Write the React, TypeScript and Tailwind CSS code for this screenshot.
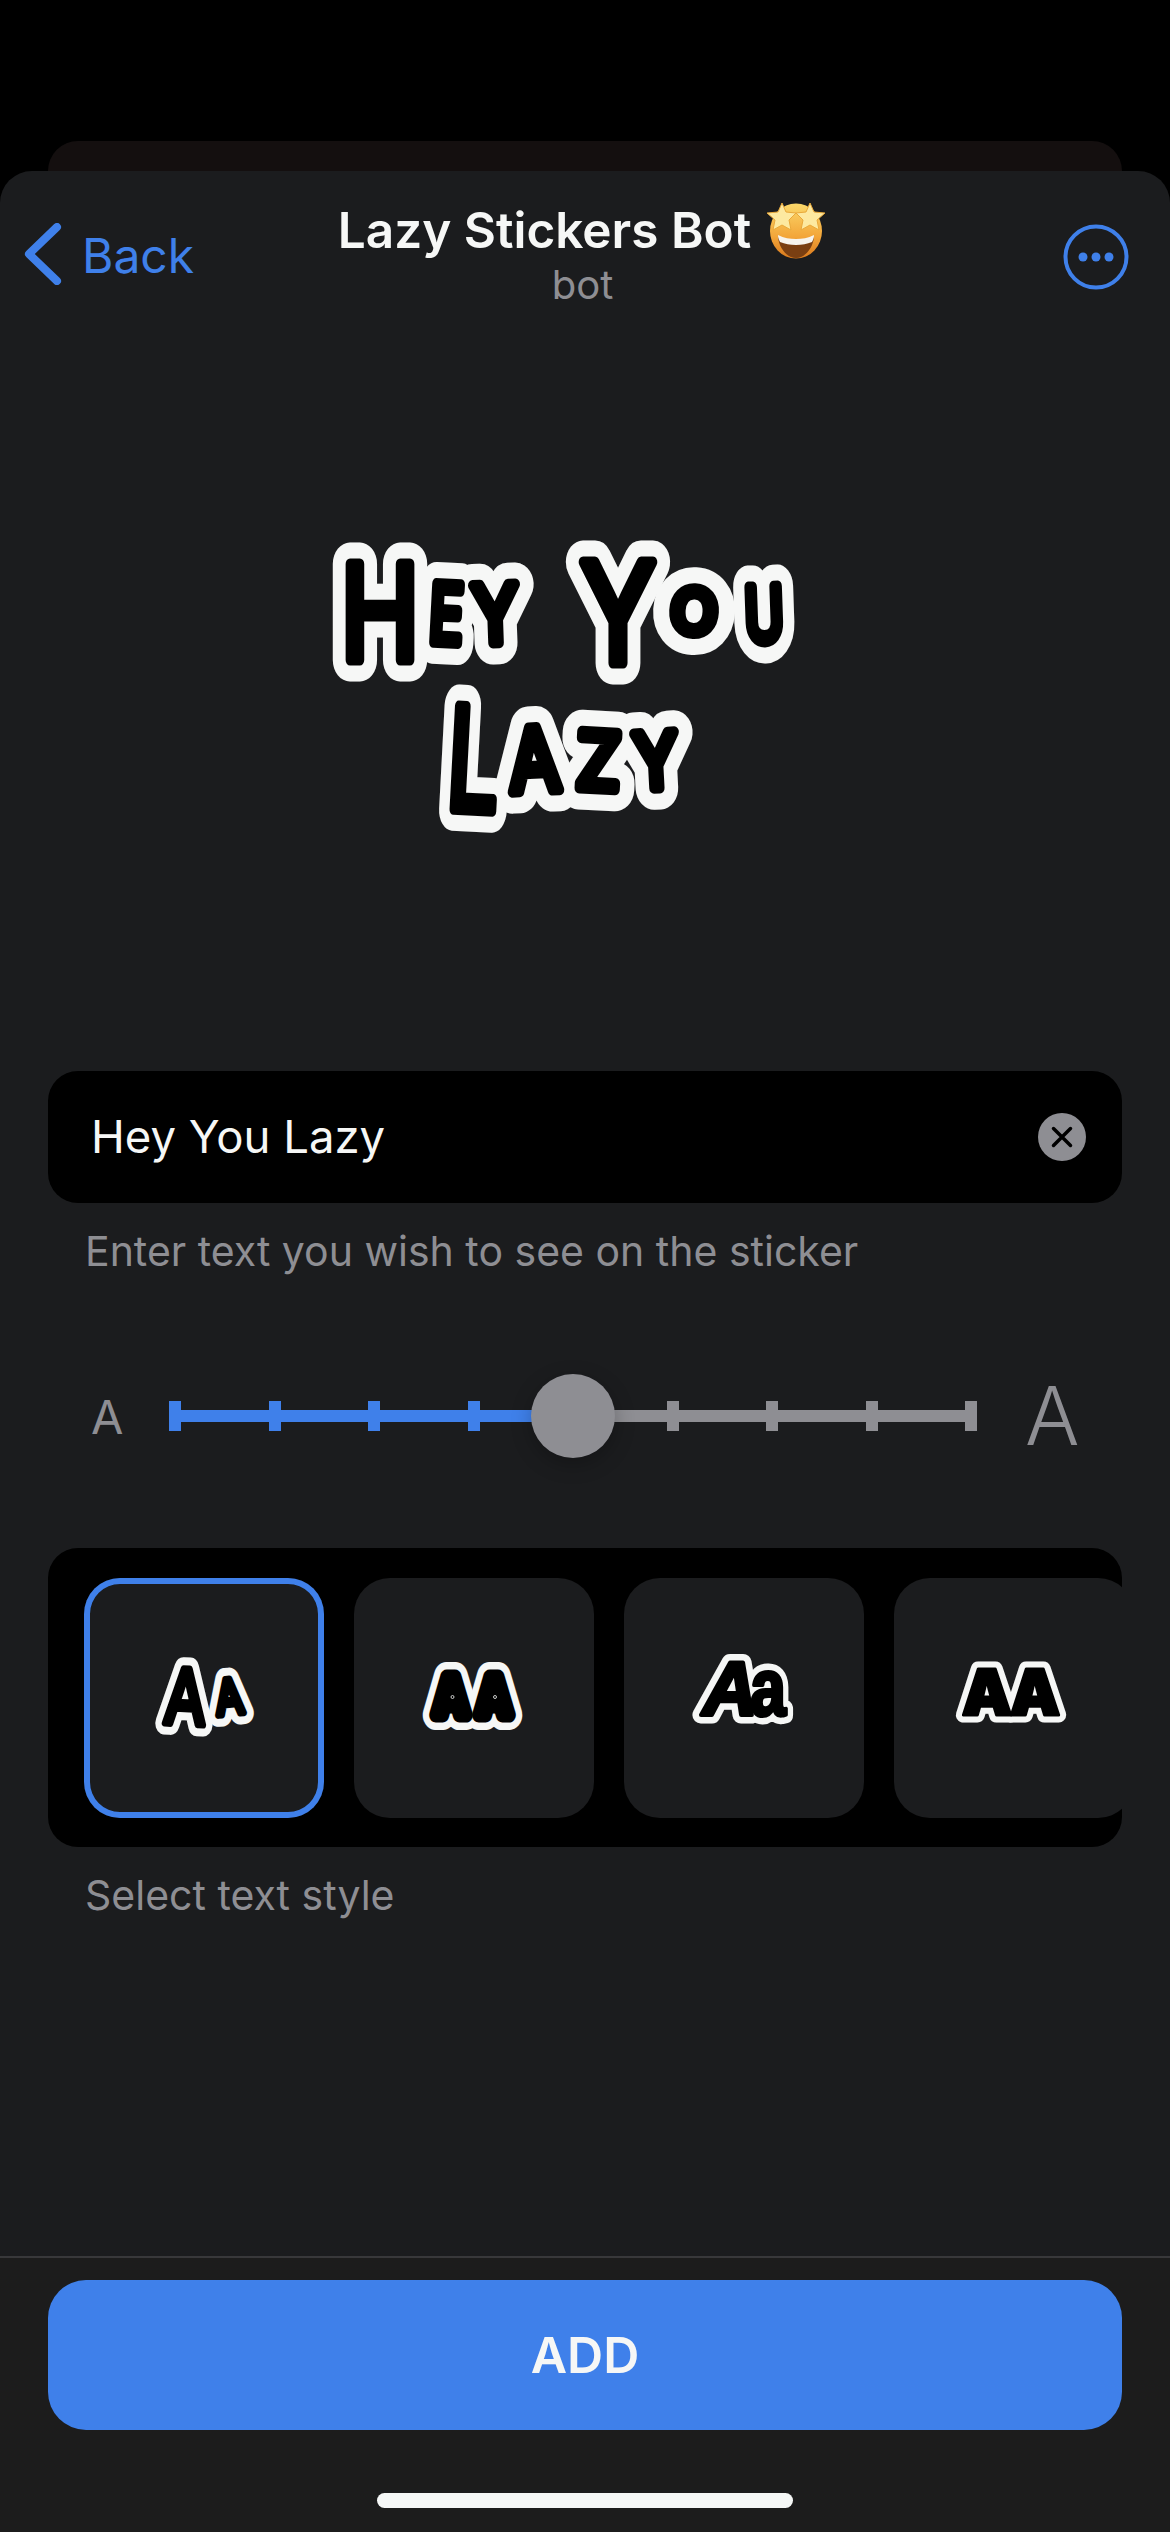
import React from 'react';

// cx = glyph centre, y = baseline, sx = horizontal squeeze
type Glyph = { ch: string; cx: number; y: number; size: number; rot?: number; sx?: number; italic?: boolean };

const heyYouLazy: Glyph[] = [
  { ch: 'H', cx: 80, y: 150, size: 132, sx: 0.8 },
  { ch: 'E', cx: 145, y: 133, size: 81, sx: 0.7, rot: 3 },
  { ch: 'Y', cx: 196, y: 133, size: 80, sx: 0.85, rot: -2 },
  { ch: 'Y', cx: 318, y: 153, size: 139, sx: 0.8 },
  { ch: 'O', cx: 393, y: 123, size: 60, rot: 3 },
  { ch: 'U', cx: 465, y: 131, size: 75, sx: 0.7, rot: -2 },
  { ch: 'L', cx: 171, y: 300, size: 142, sx: 0.65, rot: 3 },
  { ch: 'A', cx: 236, y: 281, size: 87, sx: 0.85, rot: -3 },
  { ch: 'Z', cx: 297, y: 279, size: 78, sx: 0.9, rot: 3 },
  { ch: 'Y', cx: 357, y: 278, size: 76, sx: 0.85, rot: -3 },
];

const StickerText: React.FC<{
  glyphs: Glyph[];
  family: string;
  weight: number;
  inner: number;
  outer: number;
}> = ({ glyphs, family, weight, inner, outer }) => {
  const pass = (color: string, width: number) =>
    glyphs.map((g, i) => (
      <text
        key={`${color}-${i}`}
        textAnchor="middle"
        fontSize={g.size}
        fontFamily={family}
        fontWeight={weight}
        fontStyle={g.italic ? 'italic' : 'normal'}
        fill={color}
        stroke={color}
        strokeWidth={width}
        strokeLinejoin="round"
        strokeLinecap="round"
        transform={`translate(${g.cx} ${g.y}) rotate(${g.rot ?? 0}) scale(${g.sx ?? 1} 1)`}
      >
        {g.ch}
      </text>
    ));
  return (
    <>
      {pass('#f6f7f6', outer)}
      {pass('#000000', inner)}
    </>
  );
};

const StyleTile: React.FC<{ selected?: boolean; children: React.ReactNode }> = ({ selected, children }) => (
  <div
    className={`w-[240px] h-[240px] shrink-0 rounded-[36px] bg-[#1b1c1e] ${selected ? 'shadow-[inset_0_0_0_6px_#3f80ea]' : ''}`}
  >
    <svg viewBox="0 0 240 240" className="block w-[240px] h-[240px]">
      {children}
    </svg>
  </div>
);

const StarStruck = () => (
  <svg width="62" height="58" viewBox="0 0 62 58" className="shrink-0">
    <defs>
      <linearGradient id="face" x1="0" y1="0" x2="0" y2="1">
        <stop offset="0" stopColor="#fbd86a" />
        <stop offset="0.6" stopColor="#f3a63a" />
        <stop offset="1" stopColor="#d9791d" />
      </linearGradient>
    </defs>
    <ellipse cx="31" cy="30" rx="26" ry="27.5" fill="url(#face)" />
    <path d="M31 42c-9 0-15-3-18-6 1 11 9 21 18 21s17-10 18-21c-3 3-9 6-18 6z" fill="#7a3f12" />
    <path d="M13 34c6 3 12 4 18 4s12-1 18-4c0 3-1 5-2 7-5 2-10 3-16 3s-11-1-16-3c-1-2-2-4-2-7z" fill="#f7f4ee" />
    <path d="M17 2l4 9 10 1-7 7 2 10-9-5-9 5 2-10-8-7 11-1z" fill="#fde9a0" stroke="#e9a93a" strokeWidth="1" />
    <path d="M45 2l4 9 11 1-8 7 2 10-9-5-9 5 2-10-7-7 10-1z" fill="#fde9a0" stroke="#e9a93a" strokeWidth="1" />
  </svg>
);

const ticks = [0, 1, 2, 3, 4, 5, 6, 7, 8];

const SizeSlider = () => (
  <div className="mt-[99px] h-[84px] flex items-center">
    <span className="ml-[91px] w-[78px] text-[47px] leading-none text-[#8e8e93]">A</span>
    <div className="relative w-[808px] h-[84px] flex items-center">
      <div className="w-[404px] h-[12px] bg-[#3f80ea]" />
      <div className="w-[404px] h-[12px] bg-[#8e8e93]" />
      {ticks.map((t) =>
        t === 4 ? null : (
          <div
            key={t}
            className={`absolute top-[27px] w-[12px] h-[30px] ${t < 4 ? 'bg-[#3f80ea]' : 'bg-[#8e8e93]'}`}
            style={{ left: t * 99.5 }}
          />
        ),
      )}
      <div className="absolute left-[362px] top-0 w-[84px] h-[84px] rounded-full bg-[#8e8e93] shadow-[0_6px_20px_rgba(0,0,0,0.25)]" />
    </div>
    <span className="ml-[48px] text-[81px] leading-none font-light text-[#8e8e93]">A</span>
  </div>
);

export default function App() {
  return (
    <div className="w-[1170px] h-[2532px] bg-black flex flex-col pt-[141px] overflow-hidden font-[Inter,'Noto_Sans',sans-serif]">
      <div className="mx-[48px] h-[30px] shrink-0 rounded-t-[30px] bg-[#140f0f]" />
      <div className="flex-1 flex flex-col rounded-t-[32px] bg-[#1b1c1e]">
        <header className="h-[130px] shrink-0 grid grid-cols-[1fr_auto_1fr]">
          <div className="flex items-start pt-[52px] pl-[24px]">
            <svg width="38" height="62" viewBox="0 0 38 62" fill="none">
              <path d="M33 4L5 31l28 27" stroke="#3f80ea" strokeWidth="8" strokeLinecap="round" strokeLinejoin="round" />
            </svg>
            <span className="ml-[20px] mt-[3px] text-[48px] leading-[60px] text-[#3f80ea]">Back</span>
          </div>
          <div className="flex flex-col items-center pt-[29px] mr-[5px]">
            <div className="flex items-center gap-[14px] h-[60px]">
              <span className="text-[49.5px] leading-[60px] font-semibold text-[#f6f7f6]">Lazy Stickers Bot</span>
              <StarStruck />
            </div>
            <span className="mt-[2px] text-[40px] leading-[46px] text-[#8e8e93]">bot</span>
          </div>
          <div className="flex justify-end items-start pt-[53px] pr-[41px]">
            <svg width="66" height="66" viewBox="0 0 66 66" fill="none">
              <circle cx="33" cy="33" r="30.5" stroke="#3f80ea" strokeWidth="4" />
              <circle cx="20" cy="33" r="4.5" fill="#3f80ea" />
              <circle cx="33" cy="33" r="4.5" fill="#3f80ea" />
              <circle cx="46" cy="33" r="4.5" fill="#3f80ea" />
            </svg>
          </div>
        </header>

        <div className="ml-[300px] mt-[209px] mb-[221px] h-[340px] w-[520px] shrink-0">
          <svg width="520" height="340" viewBox="0 0 520 340" className="block">
            <StickerText glyphs={heyYouLazy} family="Inter, sans-serif" weight={400} inner={11} outer={43} />
          </svg>
        </div>

        <div className="mx-[48px] h-[132px] rounded-[30px] bg-black flex items-center justify-between pl-[43px] pr-[36px]">
          <span className="text-[45.5px] leading-none text-[#f6f7f6]">Hey You Lazy</span>
          <svg width="48" height="48" viewBox="0 0 48 48">
            <circle cx="24" cy="24" r="24" fill="#8e8e93" />
            <path d="M15.5 15.5l17 17M32.5 15.5l-17 17" stroke="#000" strokeWidth="3.5" strokeLinecap="round" />
          </svg>
        </div>
        <p className="ml-[85px] mt-[24px] text-[41px] leading-[48px] text-[#8e8e93]">Enter text you wish to see on the sticker</p>

        <SizeSlider />

        <div className="mx-[48px] mt-[90px] h-[299px] rounded-[30px] bg-black overflow-hidden flex gap-[30px] pl-[36px] pt-[30px]">
          <StyleTile selected>
            <StickerText
              family="Inter, sans-serif"
              weight={400}
              inner={7}
              outer={23}
              glyphs={[
                { ch: 'A', cx: 100, y: 146, size: 76, sx: 0.8, rot: 3 },
                { ch: 'A', cx: 147, y: 136, size: 48, sx: 0.85, rot: -6 },
              ]}
            />
          </StyleTile>
          <StyleTile>
            <StickerText
              family="Inter, sans-serif"
              weight={700}
              inner={15}
              outer={30}
              glyphs={[
                { ch: 'A', cx: 97, y: 137, size: 52, sx: 0.85 },
                { ch: 'A', cx: 140, y: 137, size: 52, sx: 0.85 },
              ]}
            />
            <circle cx="98.5" cy="119" r="1.5" fill="none" stroke="#f6f7f6" strokeWidth="0.8" />
            <circle cx="141" cy="119" r="1.5" fill="none" stroke="#f6f7f6" strokeWidth="0.8" />
          </StyleTile>
          <StyleTile>
            <StickerText
              family="'Liberation Sans', sans-serif"
              weight={700}
              inner={4}
              outer={17}
              glyphs={[
                { ch: 'A', cx: 106, y: 137, size: 76, italic: true },
                { ch: 'a', cx: 144, y: 137, size: 80, sx: 0.8 },
              ]}
            />
          </StyleTile>
          <StyleTile>
            <StickerText
              family="Inter, sans-serif"
              weight={900}
              inner={3}
              outer={15}
              glyphs={[
                { ch: 'A', cx: 93, y: 137, size: 63 },
                { ch: 'A', cx: 141, y: 137, size: 63 },
              ]}
            />
          </StyleTile>
        </div>
        <p className="ml-[85px] mt-[24px] text-[41px] leading-[48px] text-[#8e8e93]">Select text style</p>

        <div className="mt-auto shrink-0 border-t-2 border-[#38383a] bg-[#1c1c1c] h-[276px] flex flex-col items-center">
          <button className="mt-[22px] w-[1074px] h-[150px] rounded-[38px] bg-[#3f80ea] text-[50px] font-semibold text-[#f6f7f6]">
            ADD
          </button>
          <div className="mt-[63px] w-[416px] h-[15px] rounded-full bg-[#f5f7f6]" />
        </div>
      </div>
    </div>
  );
}
